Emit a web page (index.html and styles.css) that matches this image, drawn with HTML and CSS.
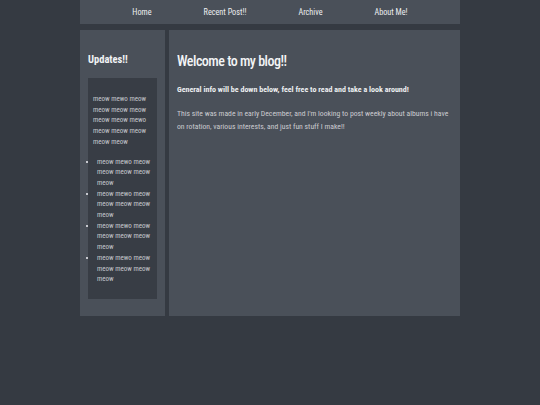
FILE: index.html
```html
<!DOCTYPE html>
<html>
<head>
<meta charset="utf-8">
<link rel="stylesheet" href="styles.css">
</head>
<body>
<div class="wrap">
  <nav class="nav">
    <a>Home</a>
    <a>Recent Post!!</a>
    <a>Archive</a>
    <a>About Me!</a>
  </nav>
  <div class="cols">
    <aside class="side">
      <h2>Updates!!</h2>
      <div class="box">
        <p>meow mewo meow meow meow meow meow meow mewo meow meow meow meow meow</p>
        <ul>
          <li>meow mewo meow meow meow meow meow</li>
          <li>meow mewo meow meow meow meow meow</li>
          <li>meow mewo meow meow meow meow meow</li>
          <li>meow mewo meow meow meow meow meow</li>
        </ul>
      </div>
    </aside>
    <main class="main">
      <h1>Welcome to my blog!!</h1>
      <p class="lead">General info will be down below, feel free to read and take a look around!</p>
      <p class="txt">This site was made in early December, and I'm looking to post weekly about albums i have on rotation, various interests, and just fun stuff I make!!</p>
    </main>
  </div>
</div>
</body>
</html>
```
FILE: styles.css
```css
html, body { margin: 0; padding: 0; }
body {
  background: #353a42;
  font-family: "Roboto Condensed", Roboto, sans-serif;
  color: #e6e7ea;
}
.wrap {
  width: 380px;
  margin: 0 auto;
}
.nav {
  height: 24px;
  background: #4a5059;
  display: flex;
  justify-content: center;
  align-items: center;
  gap: 52px;
  font-size: 8.2px;
  color: #eceef0;
}
.cols {
  display: flex;
  gap: 4px;
  margin-top: 6px;
  height: 286px;
}
.side {
  width: 85px;
  box-sizing: border-box;
  background: #4a5059;
  padding: 23px 8px 17px 8px;
  display: flex;
  flex-direction: column;
}
.side h2 {
  margin: 0 0 11px 0;
  font-size: 10.5px;
  line-height: 14px;
  font-weight: 700;
  color: #f2f3f5;
}
.box {
  background: #383d45;
  flex: 1;
  padding: 16px 2px 8px 5px;
  font-size: 7px;
  line-height: 10.7px;
  color: #c6c8ce;
}
.box p { margin: 0; }
.box ul {
  margin: 9px 0 0 0;
  padding-left: 4px;
  list-style: square;
}
.main {
  flex: 1;
  background: #4a5059;
  padding: 22px 8px;
}
.main h1 {
  margin: 0 0 13px 0;
  font-size: 14px;
  line-height: 19px;
  font-weight: 500;
  letter-spacing: -0.5px;
  color: #f3f4f6;
}
.lead {
  margin: 0 0 12px 0;
  font-size: 8px;
  line-height: 11px;
  font-weight: 700;
  color: #eceef0;
}
.txt {
  margin: 0;
  font-size: 7.7px;
  line-height: 13px;
  color: #cacbd0;
}
```
